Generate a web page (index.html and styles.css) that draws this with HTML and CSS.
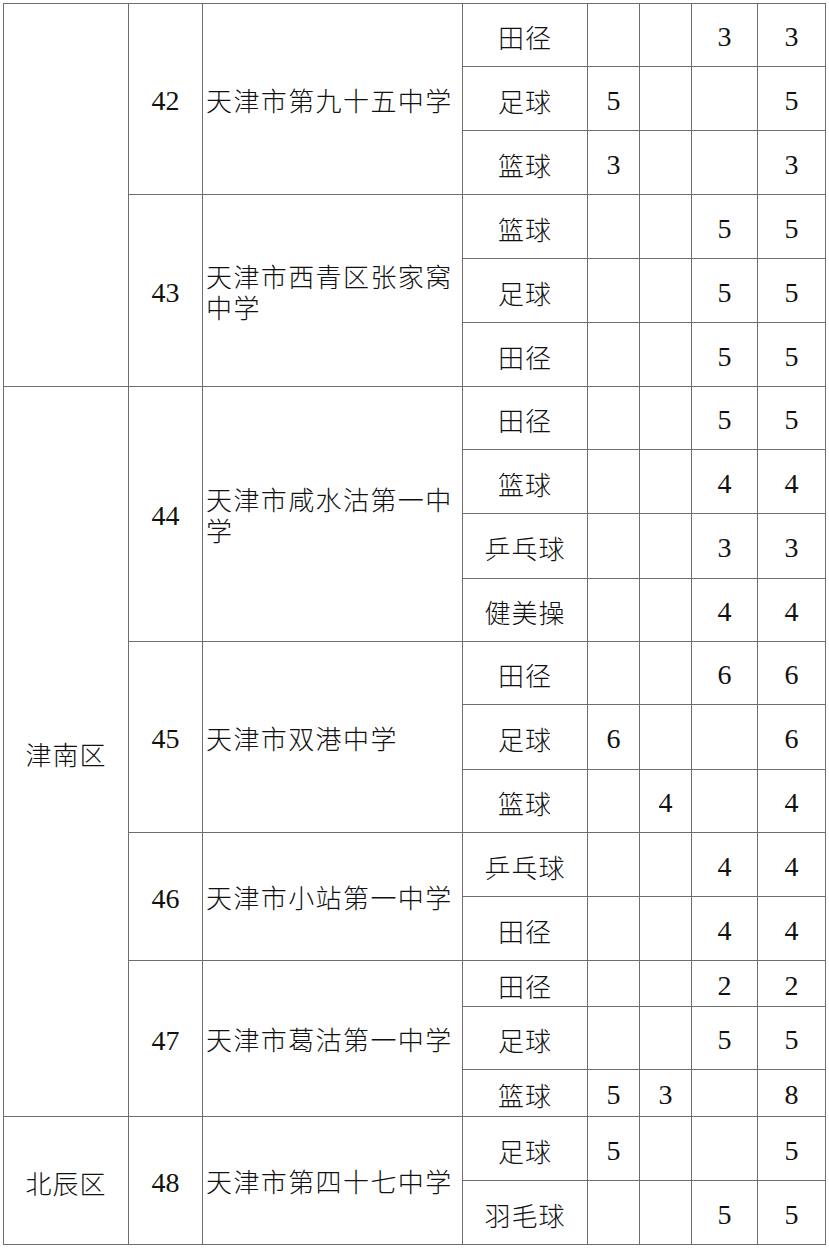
FILE: index.html
```html
<!DOCTYPE html>
<html>
<head>
<meta charset="utf-8">
<title>表</title>
<link rel="stylesheet" href="styles.css">
</head>
<body>
<table class="grid">
  <colgroup>
    <col class="c-dist"><col class="c-no"><col class="c-school"><col class="c-sport">
    <col class="c-n1"><col class="c-n2"><col class="c-n3"><col class="c-n4">
  </colgroup>
  <tbody>
    <tr class="r63"><td rowspan="6"></td><td rowspan="3" class="num">42</td><td rowspan="3" class="school">天津市第九十五中学</td><td class="sport">田径</td><td class="num"></td><td class="num"></td><td class="num">3</td><td class="num">3</td></tr>
    <tr class="r64"><td class="sport">足球</td><td class="num">5</td><td class="num"></td><td class="num"></td><td class="num">5</td></tr>
    <tr class="r64"><td class="sport">篮球</td><td class="num">3</td><td class="num"></td><td class="num"></td><td class="num">3</td></tr>
    <tr class="r64"><td rowspan="3" class="num">43</td><td rowspan="3" class="school">天津市西青区张家窝中学</td><td class="sport">篮球</td><td class="num"></td><td class="num"></td><td class="num">5</td><td class="num">5</td></tr>
    <tr class="r64"><td class="sport">足球</td><td class="num"></td><td class="num"></td><td class="num">5</td><td class="num">5</td></tr>
    <tr class="r64"><td class="sport">田径</td><td class="num"></td><td class="num"></td><td class="num">5</td><td class="num">5</td></tr>

    <tr class="r63"><td rowspan="12" class="dist">津南区</td><td rowspan="4" class="num">44</td><td rowspan="4" class="school">天津市咸水沽第一中学</td><td class="sport">田径</td><td class="num"></td><td class="num"></td><td class="num">5</td><td class="num">5</td></tr>
    <tr class="r64"><td class="sport">篮球</td><td class="num"></td><td class="num"></td><td class="num">4</td><td class="num">4</td></tr>
    <tr class="r65"><td class="sport">乒乓球</td><td class="num"></td><td class="num"></td><td class="num">3</td><td class="num">3</td></tr>
    <tr class="r63"><td class="sport">健美操</td><td class="num"></td><td class="num"></td><td class="num">4</td><td class="num">4</td></tr>
    <tr class="r63"><td rowspan="3" class="num">45</td><td rowspan="3" class="school">天津市双港中学</td><td class="sport">田径</td><td class="num"></td><td class="num"></td><td class="num">6</td><td class="num">6</td></tr>
    <tr class="r65"><td class="sport">足球</td><td class="num">6</td><td class="num"></td><td class="num"></td><td class="num">6</td></tr>
    <tr class="r63"><td class="sport">篮球</td><td class="num"></td><td class="num">4</td><td class="num"></td><td class="num">4</td></tr>
    <tr class="r64"><td rowspan="2" class="num">46</td><td rowspan="2" class="school">天津市小站第一中学</td><td class="sport">乒乓球</td><td class="num"></td><td class="num"></td><td class="num">4</td><td class="num">4</td></tr>
    <tr class="r64"><td class="sport">田径</td><td class="num"></td><td class="num"></td><td class="num">4</td><td class="num">4</td></tr>
    <tr class="r46"><td rowspan="3" class="num">47</td><td rowspan="3" class="school">天津市葛沽第一中学</td><td class="sport">田径</td><td class="num"></td><td class="num"></td><td class="num">2</td><td class="num">2</td></tr>
    <tr class="r63"><td class="sport">足球</td><td class="num"></td><td class="num"></td><td class="num">5</td><td class="num">5</td></tr>
    <tr class="r47"><td class="sport">篮球</td><td class="num">5</td><td class="num">3</td><td class="num"></td><td class="num">8</td></tr>

    <tr class="r64"><td rowspan="2" class="dist">北辰区</td><td rowspan="2" class="num">48</td><td rowspan="2" class="school">天津市第四十七中学</td><td class="sport">足球</td><td class="num">5</td><td class="num"></td><td class="num"></td><td class="num">5</td></tr>
    <tr class="r64"><td class="sport">羽毛球</td><td class="num"></td><td class="num"></td><td class="num">5</td><td class="num">5</td></tr>
  </tbody>
</table>
</body>
</html>
```

FILE: styles.css
```css
html, body {
  margin: 0;
  padding: 0;
  background: #ffffff;
}

body {
  padding: 3px 0 0 3px;
  font-family: "Liberation Serif", serif;
  color: #111111;
}

.grid {
  border-collapse: collapse;
  table-layout: fixed;
  width: 822px;
}

.c-dist { width: 125px; }
.c-no { width: 74px; }
.c-school { width: 260px; }
.c-sport { width: 125px; }
.c-n1 { width: 52px; }
.c-n2 { width: 52px; }
.c-n3 { width: 66px; }
.c-n4 { width: 68px; }

.grid td {
  border: 1px solid #6e6e6e;
  padding: 0 3px;
  vertical-align: middle;
  text-align: center;
  font-size: 26px;
  line-height: 31px;
}

.num {
  font-family: "Liberation Serif", "Times New Roman", serif;
}

.grid td.num {
  font-size: 28px;
  font-weight: 400;
  padding-top: 3px;
}

.grid td.school {
  text-align: left;
  font-family: "Noto Sans CJK SC", sans-serif;
  font-weight: 300;
  letter-spacing: 1.4px;
  padding: 0 2px 0 3px;
}

.grid td.sport,
.grid td.dist {
  font-family: "Noto Sans CJK SC", sans-serif;
  font-weight: 300;
  letter-spacing: 1px;
  padding-top: 3px;
}

.r46 { height: 46px; }
.r47 { height: 47px; }
.r63 { height: 63px; }
.r64 { height: 64px; }
.r65 { height: 65px; }
```
